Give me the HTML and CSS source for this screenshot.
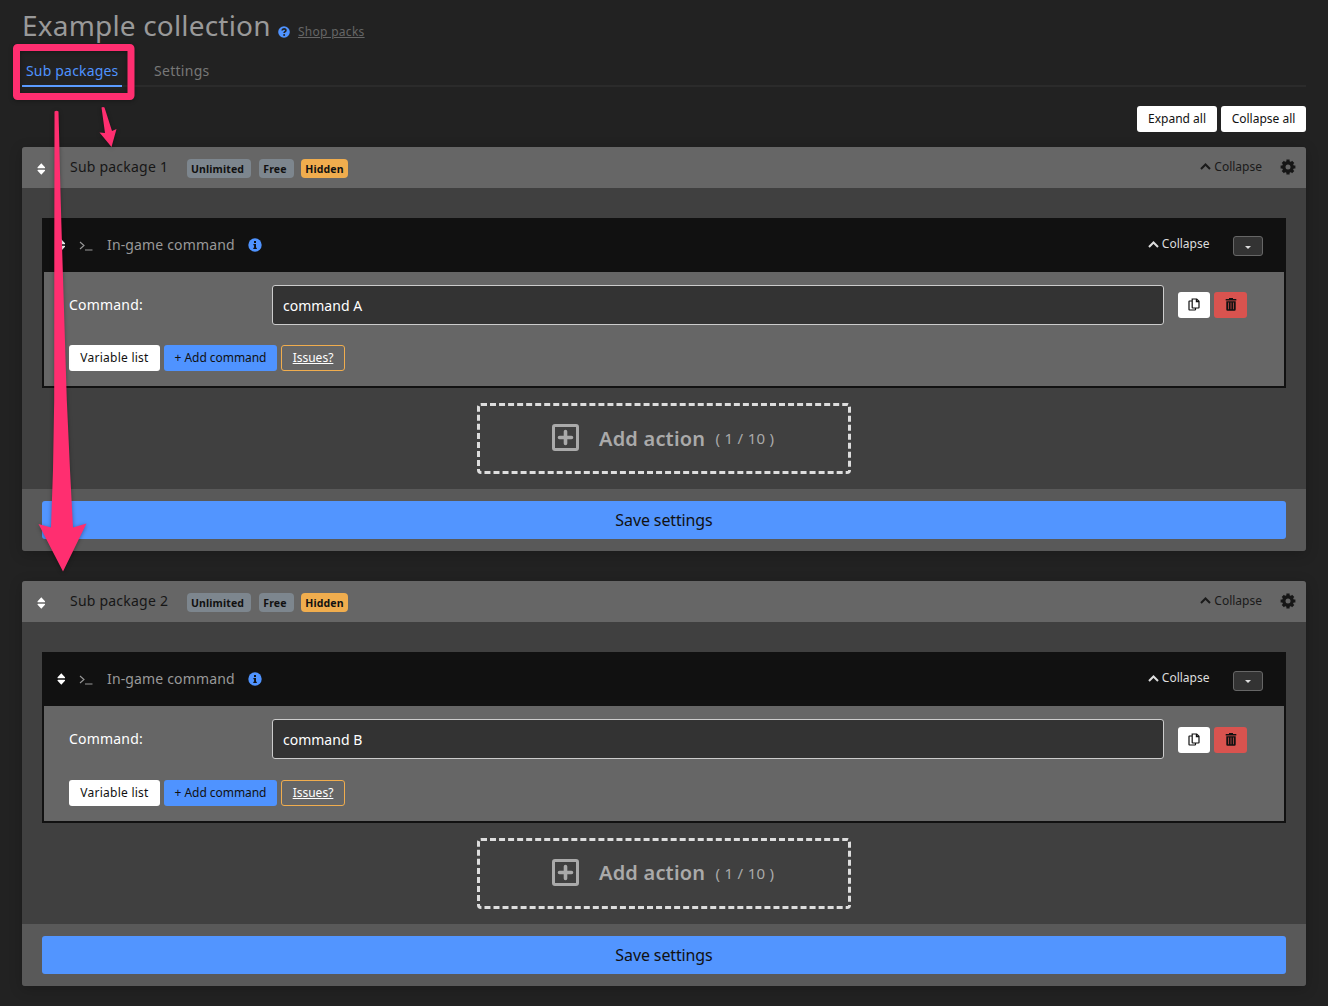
FILE: index.html
```html
<!DOCTYPE html>
<html lang="en">
<head>
<meta charset="utf-8">
<title>Example collection</title>
<link rel="stylesheet" href="styles.css">
</head>
<body>
<svg class="defs" aria-hidden="true">
  <symbol id="sort" viewBox="0 0 8 12"><path d="M4.300 .3 8 4.200Q8.400 5.300 7.400 5.300H1.200Q.2 5.300.6 4.200ZM4.300 11.700 8 7.800Q8.400 6.700 7.400 6.700H1.200Q.2 6.700.6 7.800Z"/></symbol>
  <symbol id="up" viewBox="0 0 11 7"><path d="M1 6 5.500 1.500 10 6" fill="none" stroke="currentColor" stroke-width="2"/></symbol>
  <symbol id="gear" viewBox="0 0 16 16">
    <g stroke="currentColor" stroke-width="3.200" stroke-linecap="butt"><path d="M8 .6V15.400M.6 8H15.400M2.800 2.800 13.200 13.200M13.200 2.800 2.800 13.200"/></g>
    <circle cx="8" cy="8" r="5.900"/><circle class="gear-hole" cx="8" cy="8" r="2.500"/>
  </symbol>
  <symbol id="prompt" viewBox="0 0 14 10"><path d="M1 1 5 4.500 1 8M6 9H13.500" fill="none" stroke="currentColor" stroke-width="1.100"/></symbol>
  <symbol id="info" viewBox="0 0 14 14"><circle cx="7" cy="7" r="6.700" fill="#4f93ff"/><path d="M6 3h2v2H6ZM5.400 6H8v3.700h.8V11H5.300V9.700h.8V7.200h-.7Z" fill="#111"/></symbol>
  <symbol id="help" viewBox="0 0 12 12"><circle cx="6" cy="6" r="5.800" fill="#4f93ff"/><path d="M4.100 4.500C4.200 2.400 7.900 2.300 7.900 4.400 7.900 5.700 6.100 5.600 6.100 7.100" fill="none" stroke="#222" stroke-width="1.700"/><circle cx="6.100" cy="9" r="1" fill="#222"/></symbol>
  <symbol id="copy" viewBox="0 0 12 13"><path d="M4.200 1H8.700L11 3.300V9.500Q11 10 10.500 10H4.700Q4.200 10 4.200 9.500ZM8.400 1V3.600H11M4 3H1.500Q1 3 1 3.500V11.500Q1 12 1.500 12H7Q7.500 12 7.500 11.500V10.200" fill="none" stroke="#111" stroke-width="1.200"/></symbol>
  <symbol id="trash" viewBox="0 0 12 13"><path d="M4 0H8V1H11.300V2.500H.7V1H4Z"/><path fill-rule="evenodd" d="M1.300 3.300H10.700V11.500Q10.700 12.800 9.500 12.800H2.500Q1.300 12.800 1.300 11.500ZM3.300 4.600V11.200H4V4.600ZM5.650 4.600V11.200H6.350V4.600ZM8 4.600V11.200H8.700V4.600Z"/></symbol>
  <symbol id="plus" viewBox="0 0 28 28"><rect x="1.500" y="1.500" width="24" height="24" rx="1.500" fill="none" stroke="currentColor" stroke-width="3"/><path d="M13.500 7.500V19.500M7.500 13.500H19.500" stroke="currentColor" stroke-width="3.600" stroke-linecap="round"/></symbol>
</svg>

<header class="heading">
  <h1>Example collection</h1>
  <svg class="help"><use href="#help"/></svg>
  <a class="parent">Shop packs</a>
</header>
<nav class="tabs">
  <a class="tab active">Sub packages</a>
  <a class="tab">Settings</a>
</nav>
<div class="toolbar">
  <button class="btn expand">Expand all</button>
  <button class="btn collapse-all">Collapse all</button>
</div>

<main class="packages">
  <section class="card">
    <div class="card-head">
      <svg class="sort"><use href="#sort"/></svg>
      <h2>Sub package 1</h2>
      <span class="badge unlimited">Unlimited</span>
      <span class="badge free">Free</span>
      <span class="badge hidden">Hidden</span>
      <a class="toggle"><svg class="up"><use href="#up"/></svg>Collapse</a>
      <svg class="gear"><use href="#gear"/></svg>
    </div>
    <div class="card-body">
      <div class="action">
        <div class="action-head">
          <svg class="sort"><use href="#sort"/></svg>
          <svg class="prompt"><use href="#prompt"/></svg>
          <h3>In-game command</h3>
          <svg class="info"><use href="#info"/></svg>
          <a class="toggle"><svg class="up"><use href="#up"/></svg>Collapse</a>
          <button class="menu"><span class="caret"></span></button>
        </div>
        <div class="row">
          <label>Command:</label>
          <div class="field">command A</div>
          <button class="btn copy"><svg><use href="#copy"/></svg></button>
          <button class="btn trash"><svg><use href="#trash"/></svg></button>
        </div>
        <div class="buttons">
          <button class="btn variables">Variable list</button>
          <button class="btn add">+ Add command</button>
          <button class="btn issues">Issues?</button>
        </div>
      </div>
      <div class="add-action">
        <svg><use href="#plus"/></svg><strong>Add action</strong><span>( 1 / 10 )</span>
      </div>
    </div>
    <div class="card-foot"><button class="save">Save settings</button></div>
  </section>

  <section class="card">
    <div class="card-head">
      <svg class="sort"><use href="#sort"/></svg>
      <h2>Sub package 2</h2>
      <span class="badge unlimited">Unlimited</span>
      <span class="badge free">Free</span>
      <span class="badge hidden">Hidden</span>
      <a class="toggle"><svg class="up"><use href="#up"/></svg>Collapse</a>
      <svg class="gear"><use href="#gear"/></svg>
    </div>
    <div class="card-body">
      <div class="action">
        <div class="action-head">
          <svg class="sort"><use href="#sort"/></svg>
          <svg class="prompt"><use href="#prompt"/></svg>
          <h3>In-game command</h3>
          <svg class="info"><use href="#info"/></svg>
          <a class="toggle"><svg class="up"><use href="#up"/></svg>Collapse</a>
          <button class="menu"><span class="caret"></span></button>
        </div>
        <div class="row">
          <label>Command:</label>
          <div class="field">command B</div>
          <button class="btn copy"><svg><use href="#copy"/></svg></button>
          <button class="btn trash"><svg><use href="#trash"/></svg></button>
        </div>
        <div class="buttons">
          <button class="btn variables">Variable list</button>
          <button class="btn add">+ Add command</button>
          <button class="btn issues">Issues?</button>
        </div>
      </div>
      <div class="add-action">
        <svg><use href="#plus"/></svg><strong>Add action</strong><span>( 1 / 10 )</span>
      </div>
    </div>
    <div class="card-foot"><button class="save">Save settings</button></div>
  </section>
</main>

<svg class="annotations" viewBox="0 0 160 580">
  <rect x="16.500" y="47.500" width="114.500" height="49" rx="1" fill="none" stroke="#ff2e70" stroke-width="7" stroke-linejoin="round"/>
  <path d="M54.500 111.500Q56.500 110 58.500 111.500L60.700 200 62 245 66.800 400 70 470 73 527.500 86.500 523.500 63 571.500 38.500 524 51 527.500 53 470 54.200 400 54.300 245Z"/>
  <path d="M101.500 107.500Q103 106.300 104.500 107.500L112 131 116.500 129 111.500 147 99.500 132.500 105 133Z"/>
</svg>
</body>
</html>
```
FILE: styles.css
```css
* { box-sizing: border-box; }
body {
  margin: 0;
  height: 1006px;
  padding: 0 22px;
  overflow: hidden;
  background: #222;
  color: #fff;
  font-family: "Noto Sans", sans-serif;
  font-size: 14px;
}
h1, h2, h3 { margin: 0; font-weight: 400; }
svg { display: block; flex: none; fill: currentColor; }
button { font: inherit; color: inherit; border: 0; margin: 0; padding: 0; }
.defs { position: absolute; width: 0; height: 0; }

.heading { display: flex; height: 52px; }
h1 { width: 256px; color: #999; font-size: 28px; line-height: 50px; letter-spacing: .18px; white-space: nowrap; }
.help { width: 12px; height: 12px; margin-top: 25.500px; }
.parent { margin-left: 8px; color: #666; font-size: 12px; line-height: 64px; letter-spacing: .28px; text-decoration: underline; }

.tabs { display: flex; gap: 28px; height: 35px; border-bottom: 2px solid #2b2b2b; }
.tab { height: 35px; padding: 0 4px; color: #777; line-height: 38px; letter-spacing: .28px; }
.tab.active { width: 100px; color: #4f93ff; border-bottom: 2px solid #5a9bff; letter-spacing: .18px; white-space: nowrap; }

.toolbar { display: flex; justify-content: flex-end; gap: 4px; padding: 19px 0 15px; }
.btn { display: flex; align-items: center; justify-content: center; height: 26px; border-radius: 3px; background: #fff; color: #111; font-size: 12px; line-height: 24px; white-space: nowrap; }
.expand { width: 80px; }
.collapse-all { width: 85px; }

.packages { display: flex; flex-direction: column; gap: 30px; }
.card { height: 404.4px; border-radius: 3px; background: #404040; box-shadow: 0 3px 14px rgba(0, 0, 0, .2); }
.card-head { display: flex; align-items: center; height: 41px; padding: 0 10px 0 15px; border-radius: 3px 3px 0 0; background: #666; }
.sort { width: 8px; height: 12px; }
.card-head .sort { margin-top: 2px; }
h2 { width: 117px; margin-left: 25px; color: #161616; font-size: 14px; line-height: 39px; letter-spacing: .22px; height: 41px; white-space: nowrap; }
.badge { height: 19px; margin-top: 2px; border-radius: 4px; background: #7d868e; color: #111; font-size: 10.500px; font-weight: 700; line-height: 20px; text-align: center; letter-spacing: .15px; }
.unlimited { width: 64px; padding-right: 3px; }
.free { width: 35px; margin-left: 8px; padding-right: 3px; }
.hidden { width: 47px; margin-left: 7px; background: #f0ad4e; }
.toggle { display: flex; align-items: center; gap: 3px; margin-left: auto; font-size: 12px; line-height: 16px; }
.up { width: 11px; height: 7px; }
.card-head .toggle { margin-bottom: 2px; color: #1a1a1a; }
.gear { width: 16px; height: 16px; margin: 0 0 1px 18px; color: #161616; }
.gear-hole { fill: #666; }

.card-body { height: 301.4px; padding: 30px 20px 0; }
.action { height: 170.4px; border: 2px solid #111; background: #666; }
.action-head { display: flex; align-items: center; height: 52px; padding: 0 21px 2px 13px; background: #111; }
.prompt { width: 14px; height: 10px; margin: 2px 0 0 14px; color: #999; }
h3 { width: 127px; margin-left: 14px; color: #999; font-size: 14px; line-height: 20px; letter-spacing: .15px; white-space: nowrap; }
.info { width: 14px; height: 14px; margin-left: 14px; }
.action-head .toggle { margin-bottom: 2px; color: #ddd; }
.menu { display: flex; align-items: center; justify-content: center; width: 30px; height: 20px; margin: 2.400px 0 0 23.500px; border: 1px solid #666; border-radius: 3px; background: #333; }
.caret { margin-top: 2px; border: 3px solid transparent; border-top-color: #ddd; border-bottom: 0; }

.row { display: flex; height: 53px; padding: 13px 0 0 25px; }
.row label { width: 203px; line-height: 40px; letter-spacing: .2px; }
.field { width: 892px; height: 40px; padding-left: 10px; border: 1px solid #ccc; border-radius: 3px; background: #333; line-height: 40px; }
.copy, .trash { margin-top: 7.300px; width: 32px; }
.copy { margin-left: 14px; }
.trash { width: 33px; margin-left: 4px; background: #d9534f; }
.copy svg, .trash svg { width: 12px; height: 13px; margin-bottom: 1px; }
.buttons { display: flex; gap: 4px; padding: 20.300px 0 0 25px; }
.variables { width: 91px; letter-spacing: .25px; }
.add { width: 113px; background: #4f93ff; letter-spacing: -.05px; }
.issues { width: 64px; border: 1px solid #f0ad4e; background: none; color: #fff; text-decoration: underline; }

.add-action { display: flex; align-items: center; width: 374px; height: 71px; margin: 15px auto 0; padding: 0 0 1px 72px; border: 3px dashed #ddd; border-radius: 4px; color: #aaa; white-space: nowrap; }
.add-action svg { width: 28px; height: 28px; }
.add-action strong { width: 116.500px; margin: .6px 0 0 19px; font-size: 20px; font-weight: 600; line-height: 30px; letter-spacing: .2px; }
.add-action span { font-size: 15px; line-height: 20px; letter-spacing: .3px; }

.card-foot { height: 62px; padding: 12px 20px; border-radius: 0 0 3px 3px; background: #595959; }
.save { display: block; width: 100%; height: 38px; border-radius: 3px; background: #5295ff; color: #111; font-size: 16px; line-height: 38px; letter-spacing: -.12px; }

.annotations { position: absolute; left: 0; top: 0; width: 160px; height: 580px; fill: #ff2e70; filter: drop-shadow(0 1px 2px rgba(0, 0, 0, .35)); pointer-events: none; }
```
